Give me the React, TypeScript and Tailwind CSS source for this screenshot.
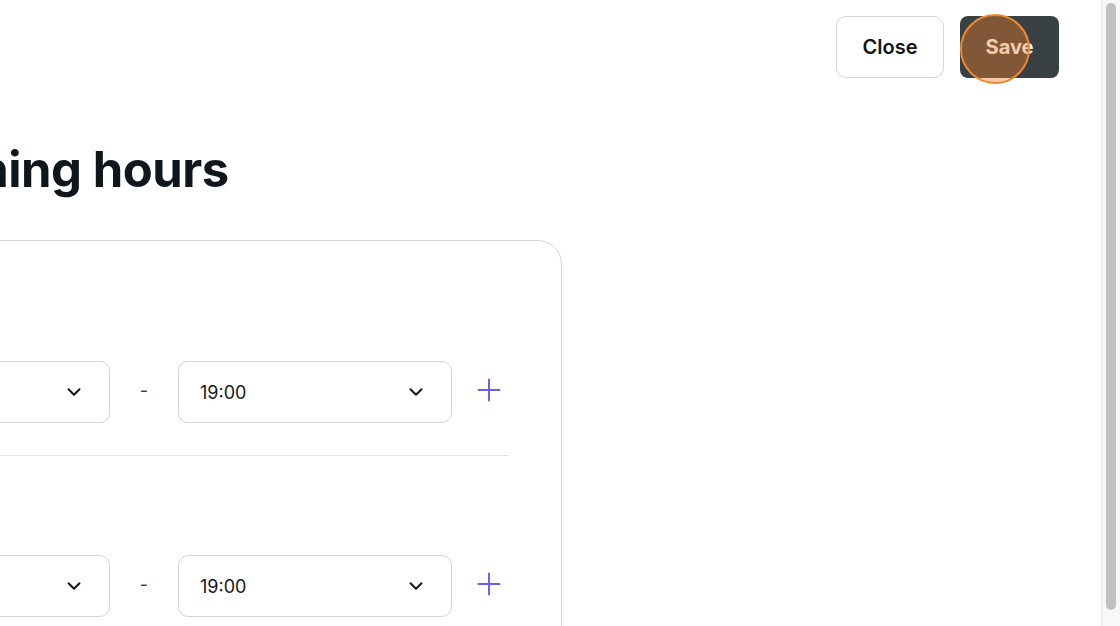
import { ChevronDown, Plus } from 'lucide-react';

const days = ['Monday', 'Tuesday'];

function TimeSelect({ value }: { value: string }) {
  return (
    <div className="flex h-[62px] w-[274px] shrink-0 items-center justify-between rounded-[10px] border border-[#d4d4d4] bg-white pl-[21px] pr-[24px]">
      <span className="text-[18px] text-[#14181b]">{value}</span>
      <ChevronDown className="h-[22px] w-[22px] text-[#14181b]" strokeWidth={2.2} />
    </div>
  );
}

function DayBlock({ day, last }: { day: string; last?: boolean }) {
  return (
    <div className={last ? 'pt-[31px]' : 'pb-[32px] border-b border-[#e5e5e5]'}>
      <div className="flex h-[68px] items-start">
        <span className="text-[18px] font-semibold text-[#14181b]">{day}</span>
      </div>
      <div className="flex items-center">
        <TimeSelect value="10:00" />
        <div className="flex w-[68px] shrink-0 justify-center pb-[4px] text-[18px] text-[#3a3f43]">-</div>
        <TimeSelect value="19:00" />
        <button className="ml-[19px] -mt-[4px] flex h-[36px] w-[36px] items-center justify-center text-[#6e5cf0]">
          <Plus className="h-[36px] w-[36px]" strokeWidth={1.3} />
        </button>
      </div>
    </div>
  );
}

export default function App() {
  return (
    <div className="flex h-[626px] w-full overflow-hidden bg-white" style={{ fontFamily: 'Inter, "Noto Sans", sans-serif' }}>
      <div className="relative flex-1 overflow-hidden">
        {/* Header */}
        <div className="flex justify-end gap-4 pt-4 pr-[42px]">
          <button className="h-[62px] w-[108px] rounded-[10px] border border-[#d6d6d6] bg-white text-[20px] font-semibold text-[#101418]">
            Close
          </button>
          <button className="relative h-[62px] w-[99px] rounded-[8px] bg-[#394044] text-[20px] font-bold text-white">
            Save
            <span className="absolute left-[0px] top-[-2px] h-[70px] w-[70px] rounded-full border-2 border-[#ef8a2e] bg-[rgba(235,125,40,0.4)]" />
          </button>
        </div>

        {/* Title */}
        <h1 className="ml-[-118px] mt-[62px] text-[49px] font-bold leading-[60px] tracking-[-0.5px] whitespace-nowrap text-[#0f171c]">
          Opening hours
        </h1>

        {/* Card */}
        <div className="ml-[-217px] mt-[40px] w-[779px] rounded-[24px] border border-[#d6d6d6] pl-[52px] pr-[52px] pt-[52px] pb-[40px]">
          <DayBlock day={days[0]} />
          <DayBlock day={days[1]} last />
        </div>
      </div>

      {/* Scrollbar */}
      <div className="flex w-[19px] shrink-0 border-l border-[#e8e8e8] bg-[#f8f8f8] px-[4px] pt-[3px] pb-[16px]">
        <div className="w-[10px] flex-1 rounded-full bg-[#c1c1c1]" />
      </div>
    </div>
  );
}
